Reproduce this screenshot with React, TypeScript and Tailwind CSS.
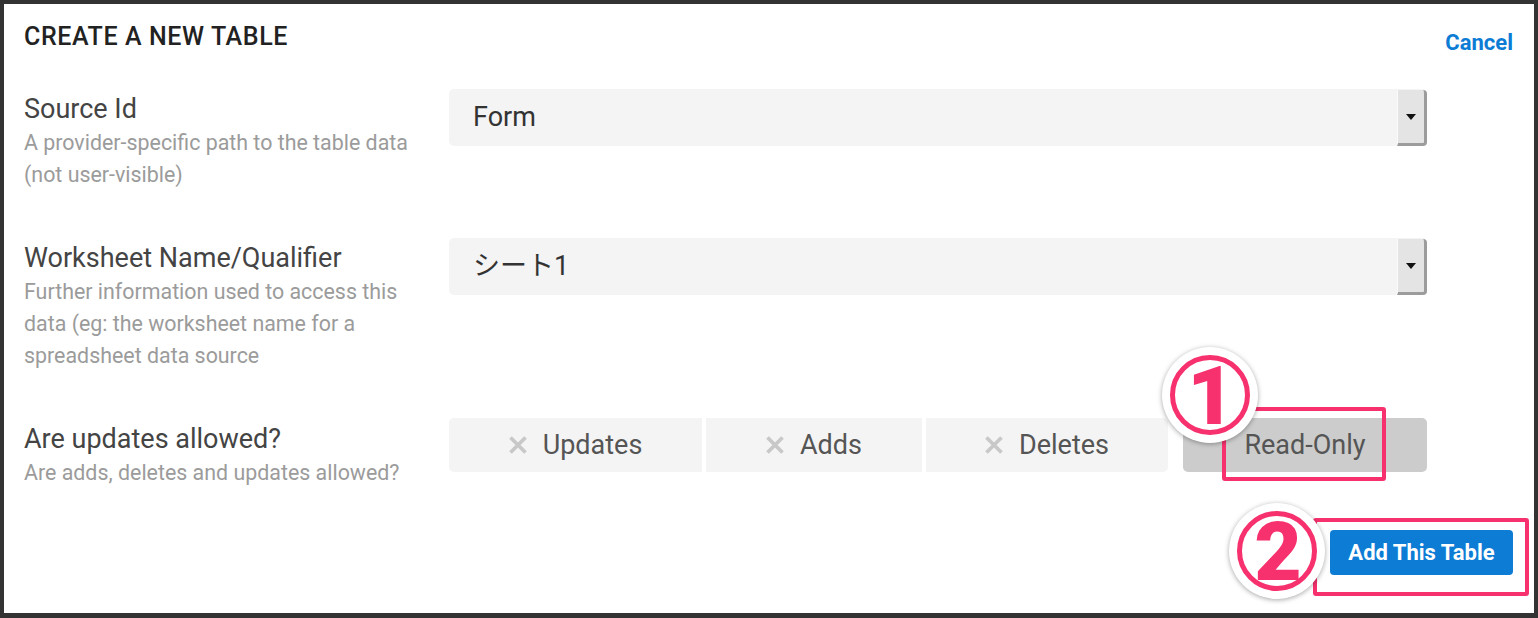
import React from "react";

const XMark = () => (
  <svg width="18" height="18" viewBox="0 0 18 18" className="shrink-0">
    <path d="M1.5 1.5 L16.5 16.5 M16.5 1.5 L1.5 16.5" stroke="#c8c8c8" strokeWidth="3.8" />
  </svg>
);

const SelectBox = ({ value }: { value: string }) => (
  <div className="flex h-[57px] w-[978px] items-center justify-between rounded-[5px] bg-[#f4f4f4]">
    <span className="pl-[24px] text-[27px] text-[#333]">{value}</span>
    <div className="mt-[1px] flex h-[56px] w-[30px] items-center justify-center self-start rounded-r-[4px] border-b-[3px] border-l border-r-[3px] border-b-[#9c9c9c] border-l-[#fafafa] border-r-[#9c9c9c] bg-[#e4e4e4]">
      <svg width="10" height="6" viewBox="0 0 10 6">
        <path d="M0 0 H10 L5 6 Z" fill="#111" />
      </svg>
    </div>
  </div>
);

const FieldLabel = ({ title, desc }: { title: string; desc: string }) => (
  <div className="w-[425px] shrink-0 pr-[22px] pt-[2px]">
    <div className="text-[27px] leading-[36px] text-[#444]">{title}</div>
    <div className="text-[21.4px] leading-[32px] text-[#9b9b9b]">{desc}</div>
  </div>
);

const Toggle = ({ label, w, cls }: { label: string; w: string; cls: string }) => (
  <div className={`flex h-[54px] items-center justify-center gap-[16px] bg-[#f4f4f4] ${w} ${cls}`}>
    <XMark />
    <span className="text-[27px] text-[#555]">{label}</span>
  </div>
);

const Badge = ({ n, pos }: { n: string; pos: string }) => (
  <div className={`absolute flex h-[96px] w-[96px] items-center justify-center rounded-full bg-white shadow-[0_1px_5px_rgba(0,0,0,0.35)] ${pos}`}>
    <div className="flex h-[80px] w-[80px] items-center justify-center rounded-full border-[5px] border-[#f7306e]">
      <span className="mt-[2px] text-[82px] font-black leading-none tracking-[-2px] text-[#f7306e]">{n}</span>
    </div>
  </div>
);

export default function App() {
  return (
    <div className="h-[618px] w-[1538px] bg-[#333] pb-[5px] pl-[4px] pr-[4px] pt-[4px] font-['Roboto','Noto_Sans_CJK_JP',sans-serif]">
      <div className="relative h-full bg-white pl-[20px] pr-[21px]">
        {/* header */}
        <div className="flex items-start justify-between pt-[20px]">
          <h1 className="text-[25px] font-medium leading-[25px] tracking-[0.6px] text-[#222]">
            CREATE A NEW TABLE
          </h1>
          <button className="mt-[8px] text-[22px] font-bold leading-[22px] text-[#0c7cd5]">Cancel</button>
        </div>

        {/* rows */}
        <div className="mt-[35px] flex flex-col gap-[47px]">
          <div className="flex items-start">
            <FieldLabel title="Source Id" desc="A provider-specific path to the table data (not user-visible)" />
            <SelectBox value="Form" />
          </div>
          <div className="flex items-start">
            <FieldLabel
              title="Worksheet Name/Qualifier"
              desc="Further information used to access this data (eg: the worksheet name for a spreadsheet data source"
            />
            <SelectBox value="シート1" />
          </div>
          <div className="flex items-start">
            <FieldLabel title="Are updates allowed?" desc="Are adds, deletes and updates allowed?" />
            <div className="-mt-[1px] flex">
              <div className="flex gap-[4px]">
                <Toggle label="Updates" w="w-[253px]" cls="rounded-l-[5px]" />
                <Toggle label="Adds" w="w-[216px]" cls="" />
                <Toggle label="Deletes" w="w-[242px]" cls="rounded-r-[5px]" />
              </div>
              <div className="ml-[15px] flex h-[54px] w-[244px] items-center justify-center rounded-[5px] bg-[#cccccc]">
                <span className="text-[27px] text-[#555]">Read-Only</span>
              </div>
            </div>
          </div>
        </div>

        {/* footer */}
        <div className="mt-[41px] flex justify-end">
          <button className="h-[45px] w-[183px] rounded-[4px] bg-[#0c7cd5] text-[22px] font-bold text-white">
            Add This Table
          </button>
        </div>

        {/* annotation 1 */}
        <div className="absolute left-[1218px] top-[403px] h-[74px] w-[164px] rounded-[3px] border-[4px] border-[#f7306e]" />
        <Badge n="1" pos="left-[1158px] top-[343px]" />

        {/* annotation 2 */}
        <div className="absolute left-[1309px] top-[514px] h-[78px] w-[216px] rounded-[3px] border-[4px] border-[#f7306e]" />
        <Badge n="2" pos="left-[1225px] top-[499px]" />
      </div>
    </div>
  );
}
